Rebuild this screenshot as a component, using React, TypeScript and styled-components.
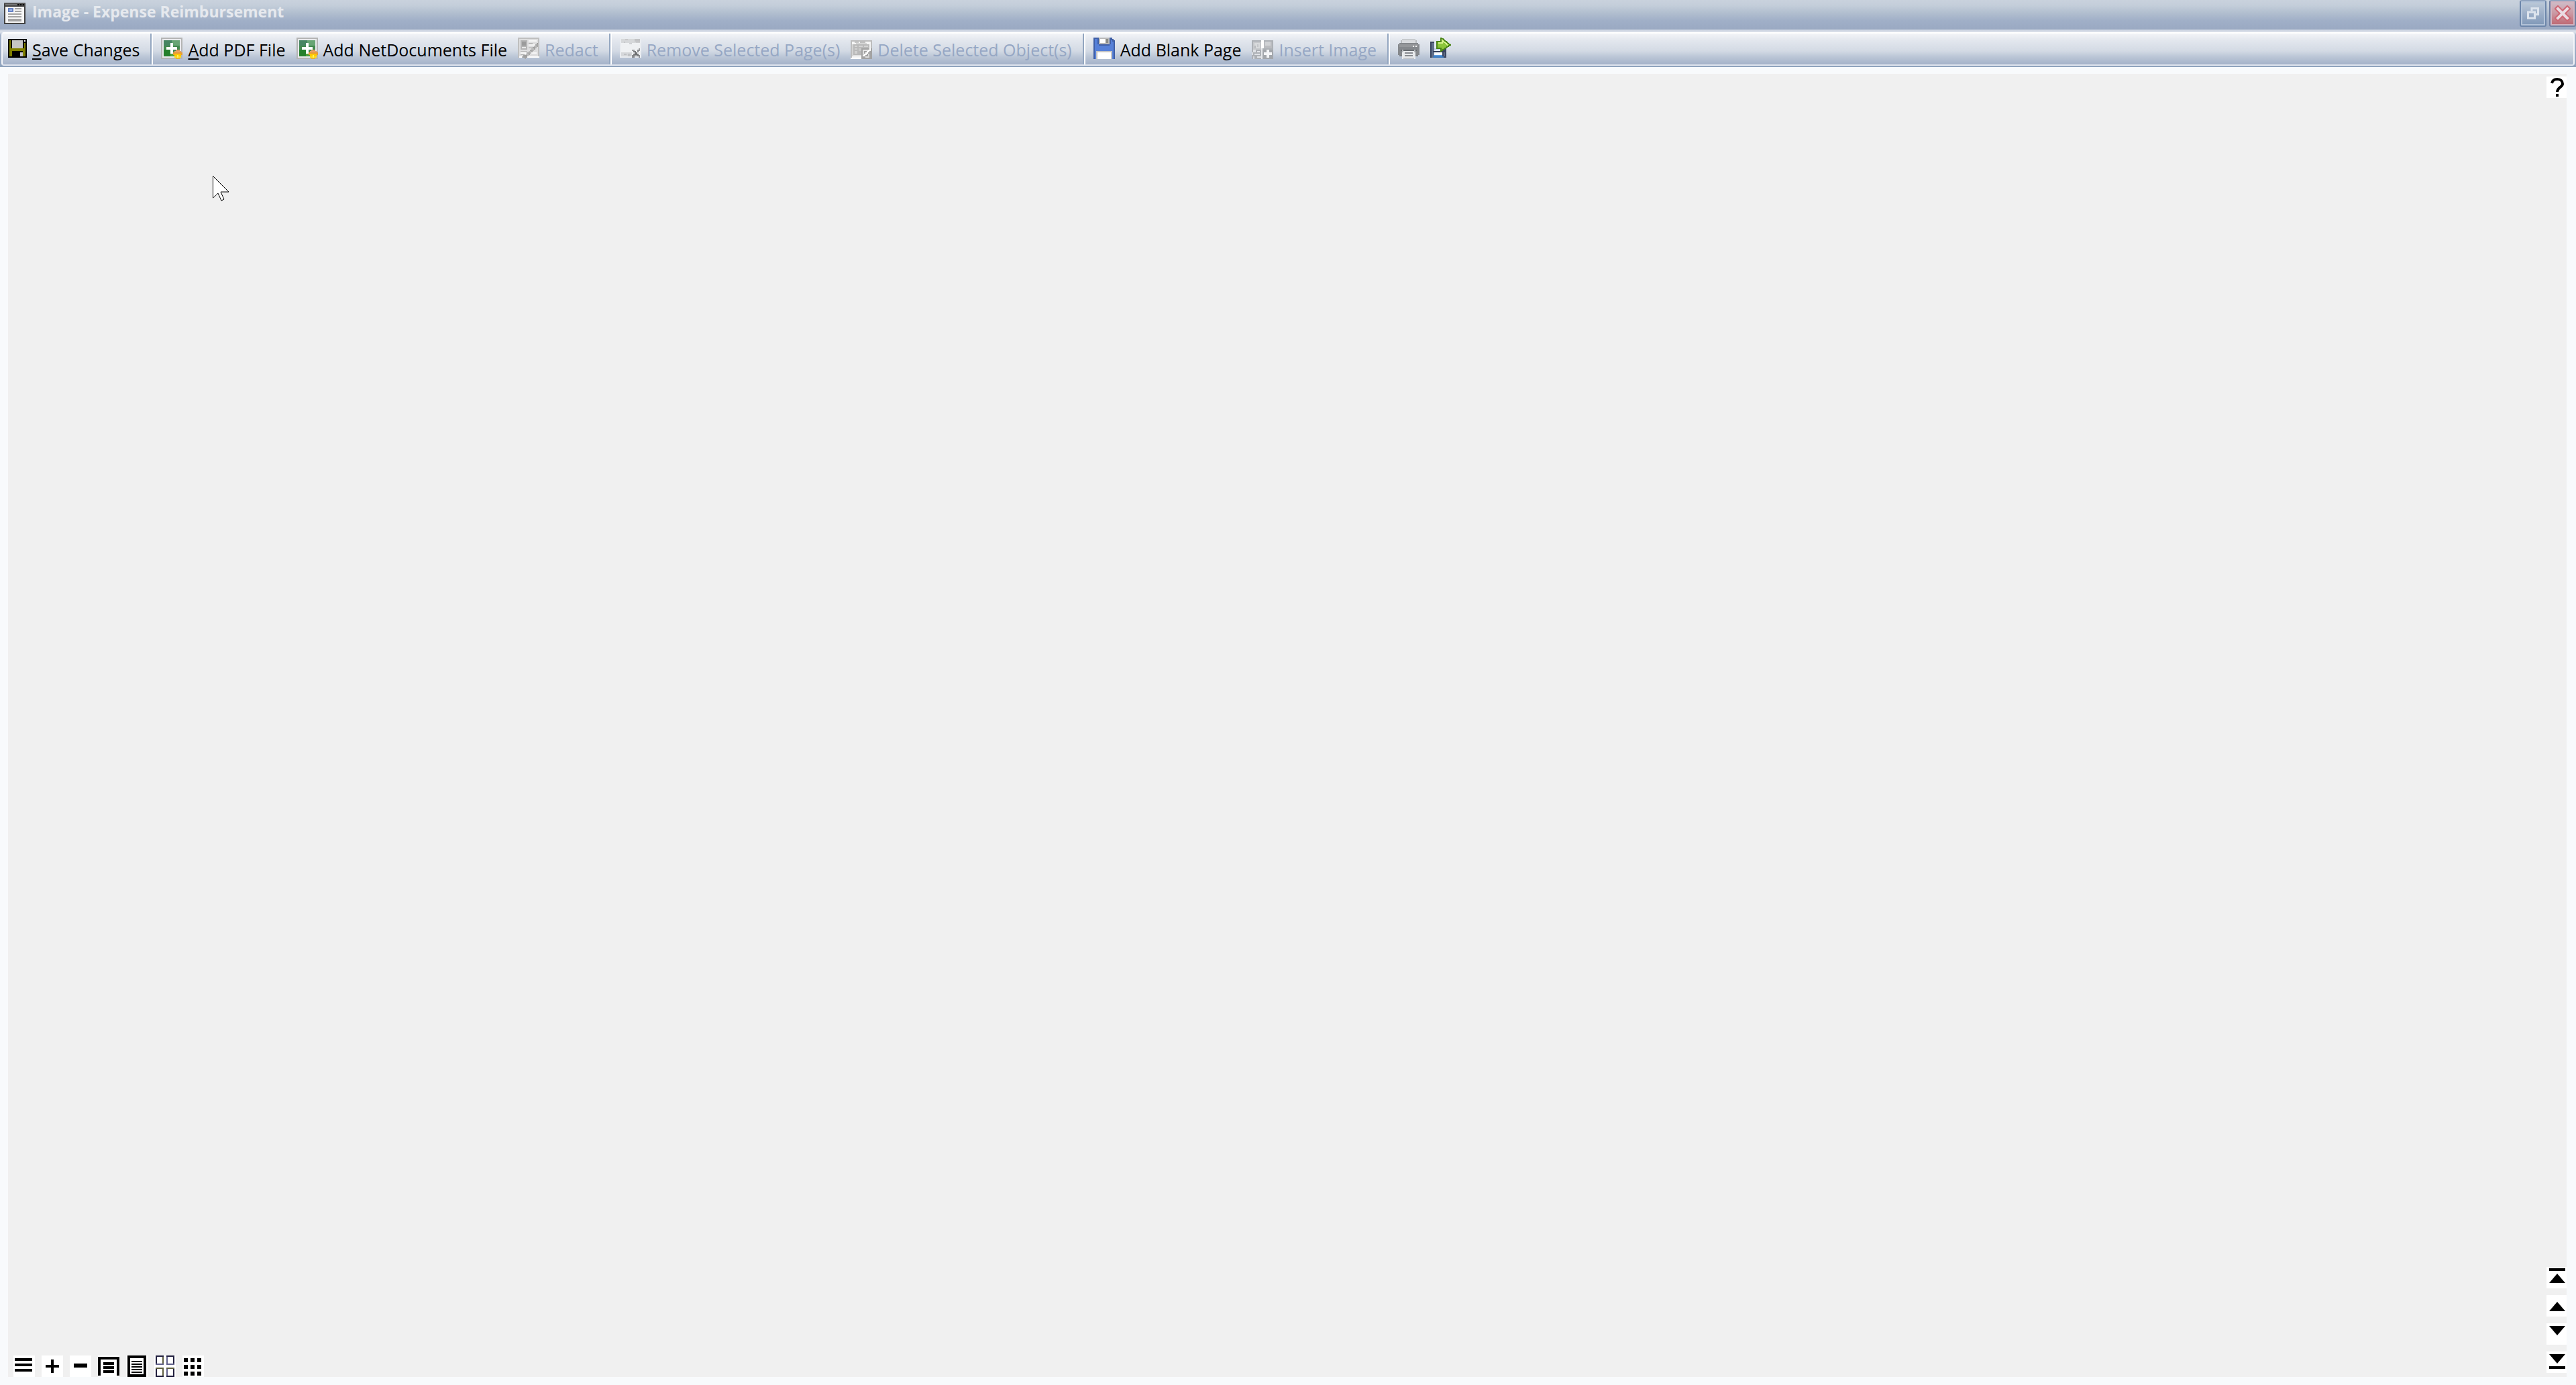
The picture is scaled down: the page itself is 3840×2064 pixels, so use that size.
import React from "react";
import styled, { createGlobalStyle } from "styled-components";

const GlobalStyle = createGlobalStyle`
  *, *::before, *::after { box-sizing: border-box; }
  body {
    margin: 0;
    background: #f8fafc;
    font-family: "Open Sans", "Noto Sans", sans-serif;
  }
`;

const Window = styled.div`
  display: flex;
  flex-direction: column;
  min-height: 100vh;
`;

const TitleBar = styled.header`
  display: flex;
  align-items: flex-start;
  height: 44px;
  padding-left: 6px;
  background: linear-gradient(#c9d2dd 0, #c4ceda 8px, #b3c0d0 18px, #a1b0c8 30px, #9aa9c2 44px);
`;

const TitleIcon = styled.span`
  display: flex;
  padding-top: 4px;
`;

const Title = styled.h1`
  flex: 1;
  margin: 0;
  padding: 0 10px;
  font-size: 23px;
  font-weight: 700;
  line-height: 34px;
  color: #e6e9ee;
`;

const Caption = styled.button<{ $danger?: boolean }>`
  display: flex;
  align-items: center;
  justify-content: center;
  width: 40px;
  height: 40px;
  margin-left: ${(p) => (p.$danger ? "4px" : "0")};
  padding: 0;
  border: 2px solid ${(p) => (p.$danger ? "#7080a2" : "#6c86aa")};
  border-top-color: #8fa3bf;
  border-radius: 3px;
  box-shadow: inset 0 0 0 2px ${(p) => (p.$danger ? "#d3b4c0" : "#b3c3d8")};
  background: ${(p) =>
    p.$danger
      ? "linear-gradient(#cfc0cb, #cb97a2 50%, #bd6670)"
      : "linear-gradient(#bdcad9, #9dafc8 50%, #7f98b8)"};
`;

const ToolbarFrame = styled.div`
  padding: 4px 2px 2px;
  background: linear-gradient(#c9d1df 0, #dde2eb 4px, #a5b3ca 8px, #8fa3bd 100%);
`;

const Toolbar = styled.div`
  display: flex;
  align-items: stretch;
  height: 50px;
  padding-left: 8px;
  border: 2px solid #f4f6fa;
  border-top-color: #ffffff;
  border-bottom-color: #dfe4ee;
  border-radius: 4px;
  background: linear-gradient(#f2f4f7 0, #e3e7ee 10px, #d3dae4 26px, #bcc7d7 34px, #a4b2c9 46px);
`;

const Tool = styled.button`
  display: flex;
  align-items: center;
  gap: 8px;
  margin: 0;
  padding: 0 16px 2px 0;
  border: 0;
  background: none;
  color: #000000;
  font: inherit;
  font-size: 25px;
  line-height: 32px;
  white-space: nowrap;
  &:disabled { color: #96a7c4; }
`;

const Label = styled.span`
  padding-top: 4px;
`;

const Key = styled.span`
  text-decoration: underline;
  text-decoration-thickness: 2px;
  text-underline-offset: 3px;
`;

const Divider = styled.span`
  width: 4px;
  margin-right: 12px;
  border-left: 2px solid #93a6c0;
  border-right: 2px solid #ffffff;
`;

const Workspace = styled.main`
  display: flex;
  flex: 1;
  padding: 10px 14px 12px 12px;
  background: #f8fafc;
`;

const Canvas = styled.section`
  position: relative;
  display: flex;
  flex: 1;
  flex-direction: column;
  justify-content: space-between;
  padding: 4px 0 0 8px;
  background: #f0f0f0;
`;

const Top = styled.div`
  display: flex;
  justify-content: flex-end;
`;

const Bottom = styled.div`
  display: flex;
  align-items: flex-end;
  justify-content: space-between;
`;

const ViewButtons = styled.div`
  display: flex;
  gap: 10px;
`;

const PageButtons = styled.div`
  display: flex;
  flex-direction: column;
  gap: 10px;
  padding-bottom: 6px;
`;

const Square = styled.button<{ $narrow?: boolean }>`
  display: flex;
  align-items: center;
  justify-content: center;
  width: ${(p) => (p.$narrow ? "30px" : "32px")};
  height: 32px;
  padding: 0;
  border: 0;
  background: #ffffff;
  overflow: hidden;
`;

const Pointer = styled.svg`
  position: absolute;
  left: 304px;
  top: 151px;
`;

const Drawing = styled.svg`
  display: block;
  flex: none;
`;

type Box = [number, number, number, number, string];

function Pixels({ boxes, children, size = 32 }: { boxes: Box[]; children?: React.ReactNode; size?: number }) {
  return (
    <Drawing width={size} height={size} viewBox={`0 0 ${size / 2} ${size / 2}`} shapeRendering="crispEdges" aria-hidden="true">
      {boxes.map(([x, y, w, h, fill], i) => (
        <rect key={i} x={x} y={y} width={w} height={h} fill={fill} />
      ))}
      {children}
    </Drawing>
  );
}

const formBoxes: Box[] = [
  [0, 0, 16, 16, "#444444"], [0, 0, 16, 1, "#555555"], [1, 1, 9, 1, "#777777"],
  [10, 1, 1, 1, "#000"], [12, 1, 1, 1, "#000"], [14, 1, 1, 1, "#000"],
  [1, 3, 14, 12, "#f6f6f6"], [3, 4, 4, 3, "#6683c6"], [4, 5, 2, 1, "#a9bce8"],
  [8, 4, 5, 1, "#a3a3a3"], [8, 6, 5, 1, "#a3a3a3"], [3, 8, 10, 1, "#a3a3a3"],
  [3, 10, 10, 1, "#a3a3a3"], [3, 12, 10, 2, "#a3a3a3"],
];

const saveBoxes: Box[] = [
  [0, 0, 14, 14, "#000"], [1, 1, 1, 12, "#808000"], [12, 3, 1, 10, "#808000"],
  [12, 1, 1, 1, "#ffffff"], [2, 7, 10, 2, "#808000"], [2, 9, 1, 4, "#808000"],
  [11, 9, 1, 4, "#808000"], [3, 1, 8, 6, "#c6c6c6"], [9, 10, 2, 3, "#c6c6c6"],
];

const addBoxes: Box[] = [
  [0, 0, 16, 16, "#b4b4b4"], [1, 1, 14, 14, "#e8eaec"], [2, 2, 12, 12, "#43894f"],
  [8, 2, 6, 4, "#68a574"], [2, 2, 6, 4, "#478562"], [2, 9, 6, 5, "#26802c"], [7, 11, 3, 3, "#55a33a"],
  [7, 4, 2, 8, "#fff"], [4, 7, 8, 2, "#fff"],
  [11, 9, 3, 1, "#dc9556"], [10, 10, 5, 1, "#e8a267"], [9, 11, 7, 2, "#e79a38"],
  [10, 12, 5, 2, "#ffc800"], [10, 14, 5, 1, "#ffdd20"], [11, 15, 3, 1, "#e6b52c"], [12, 13, 1, 2, "#fff25a"],
];

const redactBoxes: Box[] = [
  [0, 0, 16, 15, "#bfbfbf"], [1, 1, 14, 13, "#dededf"], [2, 2, 5, 7, "#b4b4b4"],
  [3, 3, 3, 3, "#9b9b9b"], [3, 7, 3, 1, "#e9e9e9"], [8, 2, 6, 1, "#f6f6f6"], [8, 4, 3, 1, "#b9b9b9"],
  [8, 5, 6, 1, "#f4f4f4"], [2, 10, 5, 1, "#bfbfbf"], [2, 11, 4, 1, "#fff"], [2, 12, 3, 1, "#bcbcbc"],
  [8, 7, 3, 1, "#c4c4c4"], [10, 11, 4, 1, "#f7f7f7"], [1, 14, 15, 1, "#fff"], [3, 14, 2, 1, "#b5b5b5"],
  [14, 4, 1, 3, "#9b9b9b"], [13, 5, 2, 2, "#a8a8a8"], [12, 6, 2, 2, "#b8b8b8"], [11, 7, 2, 2, "#a2a2a2"],
  [10, 8, 2, 2, "#bcbcbc"], [9, 9, 2, 2, "#a8a8a8"], [8, 10, 2, 2, "#bcbcbc"], [7, 11, 2, 2, "#aaaaaa"],
  [6, 12, 2, 2, "#bcbcbc"], [4, 13, 3, 2, "#a0a0a0"], [5, 15, 1, 1, "#aaa"],
];

const removeBoxes: Box[] = [
  [0, 0, 16, 15, "#e9ecf0"], [1, 1, 14, 13, "#eff1f3"], [1, 1, 14, 3, "#d6d8da"],
  [11, 1, 4, 2, "#c2c3c5"], [4, 1, 2, 1, "#c8c8ca"], [3, 3, 1, 1, "#c6c7ca"], [7, 4, 2, 1, "#cfd1d4"],
  [12, 3, 3, 1, "#cccdcf"], [1, 11, 8, 3, "#d5d7da"], [3, 12, 2, 1, "#bfc1c4"], [6, 12, 2, 2, "#c1c3c6"],
  [9, 9, 2, 1, "#9b9d9f"], [14, 8, 1, 2, "#9b9d9f"], [13, 9, 1, 2, "#85878a"], [10, 10, 2, 1, "#7d7f82"],
  [11, 11, 2, 2, "#6e7072"], [9, 13, 2, 2, "#8c8e91"], [10, 12, 1, 2, "#7e8083"], [13, 12, 1, 2, "#77797c"],
  [14, 13, 1, 2, "#909295"], [11, 13, 2, 1, "#a3a5a7"],
];

const deleteBoxes: Box[] = [
  [0, 2, 16, 14, "#bdbdbd"], [1, 3, 14, 12, "#f5f5f5"], [3, 3, 3, 1, "#c6c6c6"], [7, 3, 4, 1, "#bfbfbf"],
  [4, 4, 8, 1, "#d5d5d5"], [1, 5, 1, 9, "#d3d3d3"], [2, 5, 12, 8, "#b9b9b9"],
  [3, 6, 2, 1, "#d4d4d4"], [6, 6, 3, 1, "#d4d4d4"], [10, 6, 3, 1, "#d4d4d4"],
  [3, 8, 2, 1, "#d0d0d0"], [6, 8, 2, 2, "#c9c9c9"], [3, 10, 2, 2, "#d0d0d0"], [2, 13, 6, 1, "#e2e2e2"],
  [0, 15, 9, 1, "#fff"], [8, 8, 8, 8, "#a3a3a3"], [9, 9, 4, 1, "#e5e5e5"], [9, 10, 1, 3, "#ddd"],
  [14, 8, 1, 2, "#fff"], [13, 9, 1, 2, "#fff"], [12, 10, 1, 2, "#fff"], [11, 11, 1, 2, "#fff"],
  [10, 12, 1, 2, "#fff"], [9, 13, 1, 1, "#fff"], [13, 12, 1, 3, "#d6d6d6"], [11, 14, 2, 1, "#ddd"],
];

const blankBoxes: Box[] = [
  [0, 0, 14, 16, "#3f5fa6"], [14, 1, 1, 15, "#3f5fa6"], [15, 2, 1, 14, "#3f5fa6"],
  [1, 1, 13, 15, "#5680d8"], [14, 3, 1, 13, "#5680d8"], [3, 0, 1, 5, "#3f5fa6"], [4, 5, 8, 1, "#3f5fa6"],
  [12, 0, 1, 5, "#3f5fa6"], [4, 0, 8, 5, "#b9b9b9"], [5, 1, 4, 3, "#fff"], [9, 1, 2, 3, "#8b8b86"],
  [2, 10, 12, 6, "#c4c4c4"], [3, 11, 10, 5, "#fff"], [13, 1, 1, 1, "#3f5fa6"],
];

const insertBoxes: Box[] = [
  [0, 2, 16, 14, "#adb1b6"], [1, 3, 6, 6, "#c6c8cb"], [2, 4, 4, 4, "#d8dadc"], [2, 6, 1, 2, "#b9bbbe"],
  [4, 5, 1, 2, "#c3c5c8"], [7, 2, 2, 6, "#fff"], [9, 3, 6, 5, "#babcc0"], [10, 3, 4, 3, "#d0d2d5"],
  [7, 8, 1, 8, "#e5e7ea"], [1, 9, 2, 2, "#dfe2e6"], [4, 10, 2, 1, "#e3e5e9"], [2, 12, 4, 1, "#dfe2e6"],
  [0, 11, 1, 2, "#dadde2"], [1, 14, 1, 2, "#d4d8df"], [4, 14, 3, 1, "#e3e5e9"],
  [8, 9, 8, 7, "#a3a7ac"], [11, 9, 2, 6, "#f4f5f7"], [9, 11, 6, 2, "#f4f5f7"],
];

const printerBoxes: Box[] = [
  [3, 1, 10, 1, "#c7cacd"], [2, 2, 12, 3, "#d9dbde"], [2, 2, 1, 2, "#b7babd"], [13, 2, 1, 2, "#b7babd"],
  [1, 4, 14, 1, "#85888c"], [0, 5, 16, 8, "#85888c"], [1, 5, 14, 2, "#95979a"], [1, 13, 14, 1, "#7d8085"],
  [11, 6, 1, 1, "#eee"], [13, 6, 1, 1, "#eee"], [2, 9, 12, 1, "#686b70"],
  [3, 10, 10, 6, "#e8eaec"], [5, 11, 6, 1, "#888b90"], [5, 13, 6, 1, "#888b90"], [4, 15, 8, 1, "#c3c7cc"],
  [3, 9, 1, 2, "#b7babd"], [12, 9, 1, 2, "#b7babd"],
];

const exportBoxes: Box[] = [
  [0, 3, 12, 12, "#39455f"], [1, 4, 2, 11, "#62718d"], [3, 3, 5, 7, "#e4ebf3"], [3, 8, 7, 1, "#bfd0e4"],
  [2, 10, 8, 1, "#34405b"], [3, 11, 6, 2, "#f7fafd"], [3, 13, 6, 1, "#5b9be0"], [2, 14, 8, 1, "#3876bc"],
  [10, 11, 1, 3, "#5e6a84"],
];

const menuBoxes: Box[] = [[1, 2, 13, 2, "#000"], [1, 6, 13, 2, "#000"], [1, 10, 13, 2, "#000"]];
const plusBoxes: Box[] = [[3, 7, 10, 2, "#000"], [7, 3, 2, 10, "#000"]];
const minusBoxes: Box[] = [[3, 6, 10, 3, "#000"]];
const fitWidthBoxes: Box[] = [
  [0, 1, 16, 2, "#000"], [0, 1, 2, 14, "#000"], [14, 1, 2, 14, "#000"],
  [4, 5, 8, 2, "#000"], [4, 8, 8, 2, "#000"], [4, 11, 8, 2, "#000"],
];
const fitPageBoxes: Box[] = [
  [1, 0, 14, 16, "#000"], [3, 2, 10, 12, "#fff"], [4, 4, 8, 1, "#000"], [4, 6, 8, 1, "#000"],
  [4, 8, 8, 1, "#000"], [4, 10, 8, 1, "#000"], [4, 12, 8, 1, "#000"],
];
const fourBoxes: Box[] = [
  [1, 0, 6, 7, "#22203f"], [9, 0, 6, 7, "#22203f"], [1, 9, 6, 7, "#22203f"], [9, 9, 6, 7, "#22203f"],
  [6, 1, 1, 6, "#606040"], [9, 1, 1, 6, "#60608a"], [6, 10, 1, 5, "#606040"], [9, 10, 1, 5, "#60608a"],
  [1, 9, 6, 1, "#606040"], [9, 9, 6, 1, "#606040"], [1, 6, 6, 1, "#60608a"], [9, 6, 6, 1, "#60608a"],
  [2, 1, 4, 5, "#fff"], [10, 1, 4, 5, "#fff"], [2, 10, 4, 5, "#fff"], [10, 10, 4, 5, "#fff"],
];
const nineBoxes: Box[] = [2, 7, 12].flatMap((y) => [1, 6, 11].map((x): Box => [x, y, 3, 3, "#000"]));

const views: [string, Box[]][] = [
  ["Menu", menuBoxes], ["Zoom in", plusBoxes], ["Zoom out", minusBoxes], ["Fit width", fitWidthBoxes],
  ["Fit page", fitPageBoxes], ["Four pages", fourBoxes], ["Thumbnails", nineBoxes],
];

const pages: [string, string][] = [
  ["First page", "M4 2H28V6H4ZM16 10L28 24H4Z"],
  ["Previous page", "M16 10L28 24H4Z"],
  ["Next page", "M4 4H28L16 18Z"],
  ["Last page", "M4 4H28L16 18ZM4 22H28V26H4Z"],
];

export default function App() {
  return (
    <>
      <GlobalStyle />
      <Window>
        <TitleBar>
          <TitleIcon><Pixels boxes={formBoxes} /></TitleIcon>
          <Title>Image - Expense Reimbursement</Title>
          <Caption aria-label="Restore">
            <Drawing width="20" height="20" viewBox="0 0 20 20" fill="none" stroke="#dde4ed" strokeWidth="3" aria-hidden="true">
              <path d="M8 6V2.500H17.500V11.500H13" />
              <path d="M2.500 8H12.500V17H2.500Z" />
            </Drawing>
          </Caption>
          <Caption $danger aria-label="Close">
            <Drawing width="24" height="24" viewBox="0 0 24 24" fill="none" strokeLinecap="square" aria-hidden="true">
              <path d="M5 5L19 19M19 5L5 19" stroke="#cd6673" strokeWidth="8" />
              <path d="M5 5L19 19M19 5L5 19" stroke="#eadbe2" strokeWidth="4" />
            </Drawing>
          </Caption>
        </TitleBar>

        <ToolbarFrame>
          <Toolbar role="toolbar" aria-label="Document">
            <Tool>
              <Pixels boxes={saveBoxes} size={28} />
              <Label><Key>S</Key>ave Changes</Label>
            </Tool>
            <Divider />
            <Tool>
              <Pixels boxes={addBoxes} />
              <Label><Key>A</Key>dd PDF File</Label>
            </Tool>
            <Tool>
              <Pixels boxes={addBoxes} />
              <Label>Add NetDocuments File</Label>
            </Tool>
            <Tool disabled>
              <Pixels boxes={redactBoxes} />
              <Label>Redact</Label>
            </Tool>
            <Divider />
            <Tool disabled>
              <Pixels boxes={removeBoxes} />
              <Label>Remove Selected Page(s)</Label>
            </Tool>
            <Tool disabled>
              <Pixels boxes={deleteBoxes} />
              <Label>Delete Selected Object(s)</Label>
            </Tool>
            <Divider />
            <Tool>
              <Pixels boxes={blankBoxes} />
              <Label>Add Blank Page</Label>
            </Tool>
            <Tool disabled>
              <Pixels boxes={insertBoxes} />
              <Label>Insert Image</Label>
            </Tool>
            <Divider />
            <Tool aria-label="Print"><Pixels boxes={printerBoxes} /></Tool>
            <Tool aria-label="Export">
              <Pixels boxes={exportBoxes}>
                <path d="M5 3H8V0L15 5.500L8 10V8H5Z" fill="#8cc63a" stroke="#4b8517" strokeWidth="1" />
                <path d="M6 4H9V2L13 5.500" fill="none" stroke="#d5f28b" strokeWidth="1" />
              </Pixels>
            </Tool>
          </Toolbar>
        </ToolbarFrame>

        <Workspace>
          <Canvas aria-label="Document pages">
            <Top>
              <Square $narrow aria-label="Help">
                <Drawing width="30" height="32" viewBox="0 0 30 32" fill="none" stroke="#000" strokeWidth="4" aria-hidden="true">
                  <path d="M8 10C9 5 13 4 16 4C21 4 24 7 24 11C24 16 16 16 16 23" />
                  <path d="M14 28H18" />
                </Drawing>
              </Square>
            </Top>
            <Bottom>
              <ViewButtons>
                {views.map(([name, boxes]) => (
                  <Square key={name} aria-label={name}><Pixels boxes={boxes} /></Square>
                ))}
              </ViewButtons>
              <PageButtons>
                {pages.map(([name, d]) => (
                  <Square $narrow key={name} aria-label={name}>
                    <Drawing width="30" height="32" viewBox="0 0 30 32" aria-hidden="true"><path d={d} /></Drawing>
                  </Square>
                ))}
              </PageButtons>
            </Bottom>
            <Pointer width="28" height="42" viewBox="0 0 28 42" aria-hidden="true">
              <path d="M1.500 1.500V34L9 27L14 38L18 36L13 25H25Z" fill="#fff" stroke="#000" strokeWidth="1" />
            </Pointer>
          </Canvas>
        </Workspace>
      </Window>
    </>
  );
}
